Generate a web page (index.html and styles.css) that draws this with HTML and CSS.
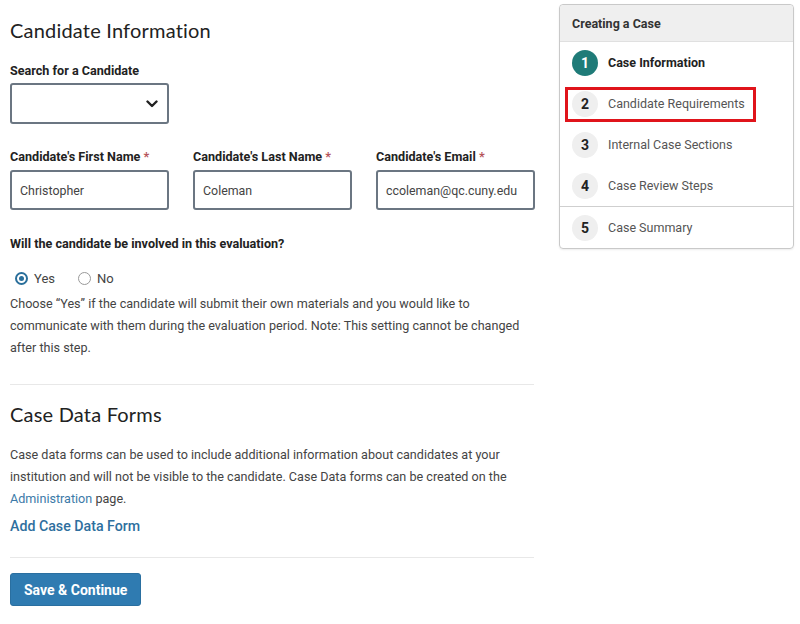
FILE: index.html
```html
<!DOCTYPE html>
<html>
<head>
<meta charset="utf-8">
<link rel="stylesheet" href="styles.css">
</head>
<body>
<div class="page">
  <main class="main">
    <h1 class="title">Candidate Information</h1>
    <div class="label lbl-search">Search for a Candidate</div>
    <div class="select">
      <svg class="chev" width="12" height="8" viewBox="0 0 12 8"><path d="M1.5 1.5 L6 6 L10.5 1.5" fill="none" stroke="#222" stroke-width="2.4" stroke-linecap="round" stroke-linejoin="round"/></svg>
    </div>
    <div class="fields">
      <div class="field">
        <div class="label">Candidate's First Name <span class="req">*</span></div>
        <div class="input">Christopher</div>
      </div>
      <div class="field">
        <div class="label">Candidate's Last Name <span class="req">*</span></div>
        <div class="input">Coleman</div>
      </div>
      <div class="field">
        <div class="label">Candidate's Email <span class="req">*</span></div>
        <div class="input">ccoleman@qc.cuny.edu</div>
      </div>
    </div>
    <div class="label question">Will the candidate be involved in this evaluation?</div>
    <div class="radios">
      <span class="radio"><span class="dot on"></span>Yes</span>
      <span class="radio"><span class="dot"></span>No</span>
    </div>
    <p class="text p1">Choose “Yes” if the candidate will submit their own materials and you would like to communicate with them during the evaluation period. Note: This setting cannot be changed after this step.</p>
    <hr class="rule rule1">
    <h2 class="title h2">Case Data Forms</h2>
    <p class="text p2">Case data forms can be used to include additional information about candidates at your institution and will not be visible to the candidate. Case Data forms can be created on the <a class="inline-link">Administration</a> page.</p>
    <a class="add-link">Add Case Data Form</a>
    <hr class="rule rule2">
    <button class="btn">Save &amp; Continue</button>
  </main>
  <aside class="card">
    <div class="card-head">Creating a Case</div>
    <div class="step"><span class="num active">1</span><span class="step-text current">Case Information</span></div>
    <div class="step marked"><span class="num">2</span><span class="step-text">Candidate Requirements</span><span class="highlight"></span></div>
    <div class="step"><span class="num">3</span><span class="step-text">Internal Case Sections</span></div>
    <div class="step"><span class="num">4</span><span class="step-text">Case Review Steps</span></div>
    <div class="step last"><span class="num">5</span><span class="step-text">Case Summary</span></div>
  </aside>
</div>
</body>
</html>
```
FILE: styles.css
```css
* { box-sizing: border-box; }
html, body { margin: 0; padding: 0; background: #fff; }
body { font-family: Roboto, "Liberation Sans", sans-serif; color: #222; }
.page {
  display: grid;
  grid-template-columns: 524px 235px;
  column-gap: 25px;
  padding: 0 6px 0 10px;
  align-items: start;
}
.main { display: block; }
.title {
  font-family: Lato, "Open Sans", sans-serif;
  font-weight: 400;
  font-size: 20px;
  line-height: 28px;
  margin: 16px 0 0;
  color: #222;
  letter-spacing: 0.2px;
}
.h2 { margin-top: 15px; }
.label {
  font-size: 12.6px;
  font-weight: 700;
  line-height: 20px;
  color: #222;
}
.lbl-search { margin-top: 17px; }
.req { color: #b5545a; }
.select {
  margin-top: 2px;
  width: 159px;
  height: 41px;
  border: 2px solid #6b7682;
  border-radius: 3px;
  display: flex;
  align-items: center;
  justify-content: flex-end;
  padding-right: 9px;
}
.fields {
  display: grid;
  grid-template-columns: 159px 159px 159px;
  column-gap: 24px;
  margin-top: 23px;
}
.field .input {
  margin-top: 3px;
  height: 40px;
  border: 2px solid #6b7682;
  border-radius: 3px;
  padding-left: 8px;
  display: flex;
  align-items: center;
  font-size: 12.4px;
  color: #444;
}
.question { margin-top: 24px; }
.radios {
  margin-top: 14px;
  display: flex;
  gap: 23px;
  height: 20px;
  align-items: center;
  padding-left: 5px;
  font-size: 13px;
  color: #444;
}
.radio { display: flex; align-items: center; gap: 6px; }
.dot {
  width: 13px; height: 13px;
  border-radius: 50%;
  border: 1.5px solid #999;
  display: inline-flex;
  align-items: center;
  justify-content: center;
}
.dot.on { border: 2px solid #2a6f9b; }
.dot.on::after {
  content: "";
  width: 5px; height: 5px;
  border-radius: 50%;
  background: #2a6f9b;
}
.text {
  font-size: 12.6px;
  line-height: 22px;
  color: #444;
  margin: 0;
}
.p1 { margin-top: 5px; }
.p2 { margin-top: 16px; }
.rule {
  border: 0;
  height: 1px;
  background: #e8e8e8;
  margin: 0;
}
.rule1 { margin-top: 25px; }
.rule2 { margin-top: 21px; }
.inline-link { color: #3b7aa8; text-decoration: none; }
.add-link {
  display: block;
  margin-top: 6px;
  font-size: 14.2px;
  font-weight: 500;
  line-height: 20px;
  color: #2e6f9e;
  text-decoration: none;
}
.btn {
  margin-top: 15px;
  height: 33px;
  padding: 0 13px;
  background: #2f7bb1;
  color: #fff;
  border: 1px solid #2a6fa0;
  border-radius: 3px;
  font-family: Roboto, "Liberation Sans", sans-serif;
  font-size: 14px;
  font-weight: 700;
  display: block;
}
.card {
  margin-top: 4px;
  border: 1px solid #c9c9c9;
  border-radius: 4px;
  overflow: visible;
  box-shadow: 0 1px 2px rgba(0,0,0,0.08);
}
.card-head {
  height: 37px;
  background: #efefef;
  border-bottom: 1px solid #e0e0e0;
  border-radius: 4px 4px 0 0;
  font-size: 12.5px;
  font-weight: 700;
  color: #333;
  display: flex;
  align-items: center;
  padding-left: 12px;
}
.step {
  position: relative;
  height: 41px;
  display: flex;
  align-items: center;
  padding-left: 12px;
  gap: 10px;
}
.step.last { border-top: 1px solid #cfcfcf; height: 42px; }
.num {
  width: 26px; height: 26px;
  border-radius: 50%;
  background: #efefef;
  color: #222;
  font-size: 14px;
  font-weight: 700;
  display: flex;
  align-items: center;
  justify-content: center;
}
.num.active { background: #1f7b78; color: #fff; }
.step-text { font-size: 12.5px; color: #555; }
.step-text.current { color: #222; font-weight: 700; }
.highlight {
  position: absolute;
  left: 5px;
  top: 4px;
  width: 191px;
  height: 35px;
  border: 3px solid #e0141b;
}
```
